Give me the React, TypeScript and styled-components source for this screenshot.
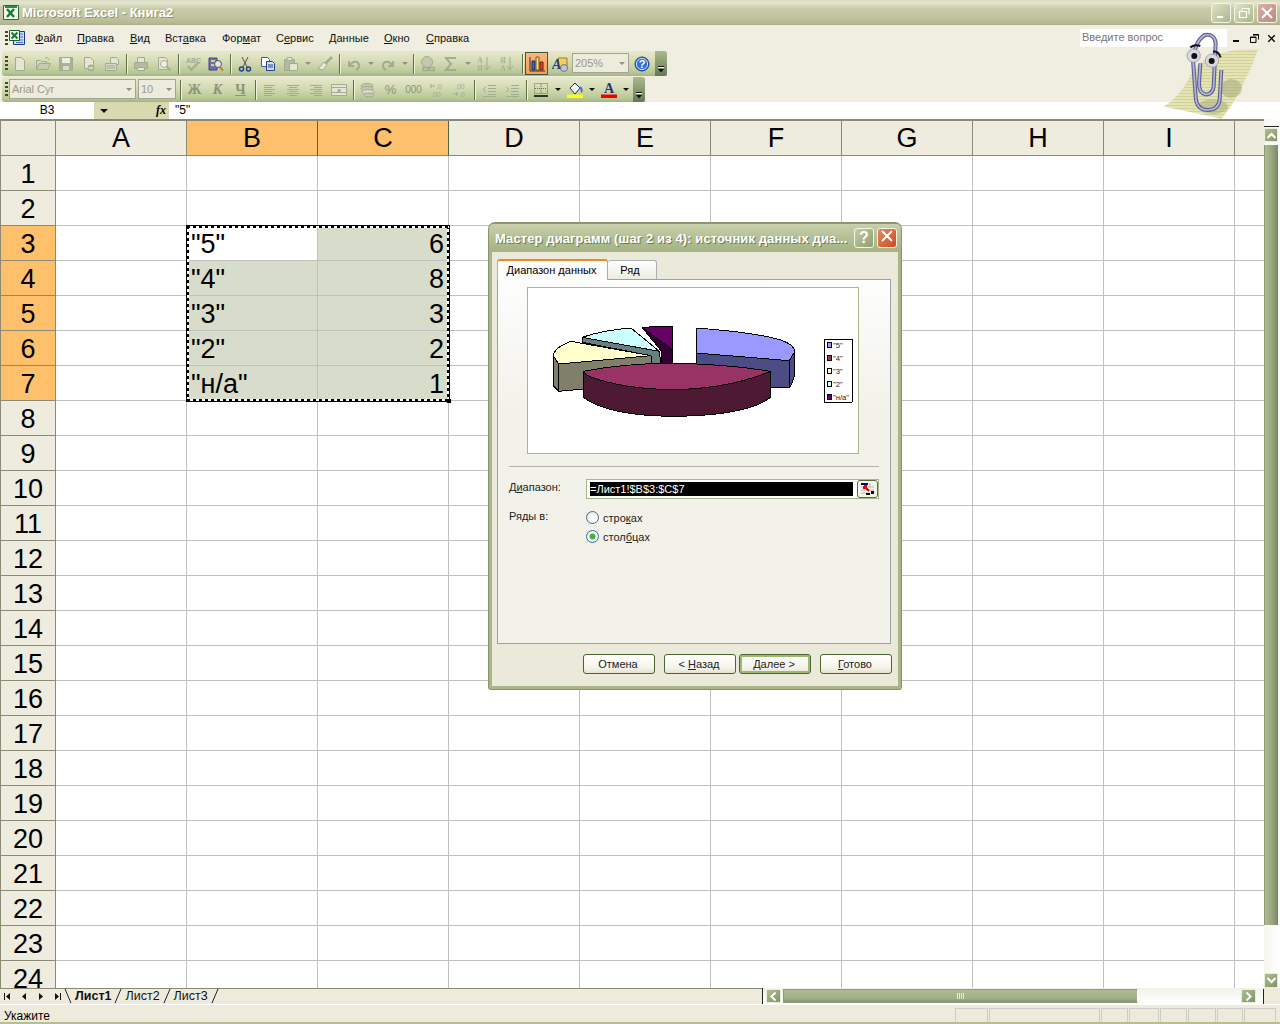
import React from 'react'
import styled, { createGlobalStyle } from 'styled-components'

const GlobalStyle = createGlobalStyle`
  html, body {
    margin: 0;
    padding: 0;
    overflow: hidden;
    background: #fff;
  }
  * {
    box-sizing: border-box;
  }
`

const UI_FONT = `"Liberation Sans", Arial, sans-serif`

const App_ = styled.div`
  position: relative;
  width: 1280px;
  height: 1024px;
  overflow: hidden;
  display: flex;
  flex-direction: column;
  font-family: ${UI_FONT};
  font-size: 11px;
  color: #000;
  background: #fff;
`

/* ---- title bar ---- */
const TitleBar = styled.div`
  height: 25px;
  flex: none;
  display: flex;
  align-items: center;
  padding: 0 3px 0 3px;
  background: linear-gradient(#d9dcc0 0, #e4e6cf 3px, #c9cca9 8px, #bfc39e 18px, #b6ba94 23px, #a9ad8a 25px);
`

const TitleText = styled.span`
  margin-left: 2px;
  flex: 1;
  color: #fff;
  font-size: 13px;
  font-weight: 700;
  text-shadow: 1px 1px 0 #8f9373;
`

const WinButton = styled.div<{ $close?: boolean }>`
  width: 20px;
  height: 20px;
  margin-left: 3px;
  border: 1px solid #f4f5e8;
  border-radius: 3px;
  background: ${p => (p.$close ? 'linear-gradient(135deg,#d8b0a8,#b98980)' : 'linear-gradient(135deg,#dfe3c8,#a9b58b)')};
  display: flex;
  align-items: center;
  justify-content: center;
`

/* ---- menu ---- */
const MenuBar = styled.div`
  height: 26px;
  flex: none;
  display: flex;
  align-items: center;
  padding-left: 5px;
  background: #efeee0;
`

const Grip = styled.div<{ $h?: number }>`
  width: 3px;
  height: ${p => p.$h ?? 15}px;
  flex: none;
  background: repeating-linear-gradient(#3f4a2a 0 2px, transparent 2px 4px);
`

const MenuLogo = styled.div`
  flex: none;
  width: 27px;
  display: flex;
`

const MenuItem = styled.span<{ $w: number }>`
  width: ${p => p.$w}px;
  flex: none;
  color: #111;
  white-space: nowrap;
  u {
    text-underline-offset: 1px;
  }
`

const HelpBox = styled.div`
  margin-left: auto;
  width: 147px;
  height: 18px;
  display: flex;
  align-items: center;
  padding: 0 0 2px 2px;
  background: #fff;
  color: #777;
  font-size: 11px;
`

const MdiButtons = styled.div`
  width: 53px;
  display: flex;
  justify-content: space-between;
  padding-left: 5px;
  padding-right: 4px;
`

/* ---- toolbars ---- */
const ToolRow = styled.div<{ $h: number }>`
  height: ${p => p.$h}px;
  flex: none;
  padding-left: 2px;
  display: flex;
  align-items: flex-start;
  background: #efeee0;
`

const Toolbar = styled.div<{ $w: number }>`
  width: ${p => p.$w}px;
  height: 25px;
  display: flex;
  align-items: center;
  padding-left: 3px;
  border-radius: 3px 0 0 3px;
  background: linear-gradient(#e6e9cb, #d6dcb6 40%, #b9c896 85%, #a3b57f);
`

const Chevron = styled.div`
  margin-left: auto;
  width: 12px;
  height: 25px;
  flex: none;
  border-radius: 0 3px 3px 0;
  background: linear-gradient(#a9b98c, #84946a 60%, #66755a);
  display: flex;
  flex-direction: column;
  align-items: center;
  justify-content: flex-end;
  padding-bottom: 3px;
`

const Tool = styled.div<{ $active?: boolean; $w?: number }>`
  width: ${p => p.$w ?? 23}px;
  height: 23px;
  flex: none;
  display: flex;
  align-items: center;
  justify-content: center;
  ${p => (p.$active ? 'background: linear-gradient(#fbb97e,#f79a55); border: 1px solid #3e5a3e;' : '')}
`

const Sep = styled.div`
  width: 6px;
  height: 20px;
  flex: none;
  display: flex;
  justify-content: center;
  &::before {
    content: '';
    width: 1px;
    background: #5f6e45;
    box-shadow: 1px 0 0 #f0f3dc;
  }
`

const Drop = styled.div<{ $w?: number; $dark?: boolean }>`
  width: ${p => p.$w ?? 11}px;
  flex: none;
  display: flex;
  justify-content: center;
  &::before {
    content: '';
    border-left: 3px solid transparent;
    border-right: 3px solid transparent;
    border-top: 3px solid ${p => (p.$dark ? '#111' : '#8d957a')};
  }
`

const Combo = styled.div<{ $w: number }>`
  width: ${p => p.$w}px;
  height: 20px;
  flex: none;
  margin: 0 1px 1px;
  border: 1px solid #a3a592;
  background: #ecebdc;
  color: #9a9a8a;
  font-size: 11px;
  line-height: 16px;
  display: flex;
  align-items: center;
  padding-left: 2px;
  justify-content: space-between;
`

const FormatGlyph = styled.span<{ $italic?: boolean; $under?: boolean }>`
  font-family: "Liberation Serif", serif;
  font-size: 14px;
  font-weight: 700;
  color: #8a9377;
  font-style: ${p => (p.$italic ? 'italic' : 'normal')};
  text-decoration: ${p => (p.$under ? 'underline' : 'none')};
`

const PlainGlyph = styled.span<{ $size?: number }>`
  font-size: ${p => p.$size ?? 12}px;
  color: #8a9377;
`

/* ---- formula bar ---- */
const FormulaBar = styled.div`
  height: 17px;
  flex: none;
  display: flex;
  background: #d8d9b1;
  font-size: 12px;
`

const NameBox = styled.div`
  width: 94px;
  text-align: center;
  background: #fff;
  line-height: 17px;
`

const NameDrop = styled.div`
  width: 19px;
  display: flex;
  align-items: center;
  justify-content: center;
  &::before {
    content: '';
    border-left: 4px solid transparent;
    border-right: 4px solid transparent;
    border-top: 4px solid #111;
  }
`

const FxLabel = styled.div`
  width: 56px;
  padding-right: 3px;
  text-align: right;
  font-family: "Liberation Serif", serif;
  font-style: italic;
  font-weight: 700;
  line-height: 17px;
`

const FormulaInput = styled.div`
  flex: 1;
  background: #fff;
  padding-left: 6px;
  line-height: 17px;
`

/* ---- sheet ---- */
const Workspace = styled.div`
  flex: none;
  height: 869px;
  display: flex;
`

const Sheet = styled.div`
  position: relative;
  width: 1264px;
  overflow: hidden;
  padding-left: 1px;
  border-top: 2px solid #8a8a75;
  box-shadow: inset 1px 0 0 #8a8a75;
`

const Grid = styled.div`
  display: grid;
  grid-template-columns: 55px repeat(10, 131px);
  grid-auto-rows: 35px;
  font-size: 27px;
  line-height: 36px;
`

const ColHead = styled.div<{ $on?: boolean }>`
  text-align: center;
  background: ${p => (p.$on ? '#ffc06c' : '#eeebdf')};
  border-right: 1px solid ${p => (p.$on ? '#4e6a3c' : '#8a8a75')};
  border-bottom: 1px solid #8a8a75;
  line-height: 34px;
`

const RowHead = styled.div<{ $on?: boolean }>`
  text-align: center;
  background: ${p => (p.$on ? '#ffc06c' : '#eeebdf')};
  border-right: 1px solid #8a8a75;
  border-bottom: 1px solid #8a8a75;
`

const Cell = styled.div<{ $sel?: boolean; $right?: boolean }>`
  background: ${p => (p.$sel ? '#d8dccb' : '#fff')};
  border-right: 1px solid #c0c0c0;
  border-bottom: 1px solid #c0c0c0;
  padding: 0 4px 0 4px;
  text-align: ${p => (p.$right ? 'right' : 'left')};
  white-space: nowrap;
`

const Selection = styled.div`
  position: absolute;
  left: 186px;
  top: 104px;
  width: 264px;
  height: 177px;
  border: 1px solid #000;
  pointer-events: none;
  background:
    repeating-linear-gradient(90deg, #000 0 3px, #fff 3px 6px) top / 100% 2px no-repeat,
    repeating-linear-gradient(90deg, #000 0 3px, #fff 3px 6px) bottom / 100% 2px no-repeat,
    repeating-linear-gradient(#000 0 3px, #fff 3px 6px) left / 2px 100% no-repeat,
    repeating-linear-gradient(#000 0 3px, #fff 3px 6px) right / 2px 100% no-repeat;
  &::after {
    content: '';
    position: absolute;
    right: -2px;
    bottom: -2px;
    width: 4px;
    height: 4px;
    background: #000;
  }
`

/* ---- scrollbars ---- */
const VScroll = styled.div`
  width: 16px;
  display: flex;
  flex-direction: column;
  align-items: flex-start;
  background: linear-gradient(90deg, #f6f5ee, #fff);
`

const ScrollEnd = styled.div`
  width: 15px;
  height: 8px;
  margin-bottom: 1px;
  border-bottom: 1px solid #222;
  flex: none;
`

const ScrollButton = styled.div<{ $w?: number; $h?: number }>`
  width: ${p => p.$w ?? 14}px;
  height: ${p => p.$h ?? 14}px;
  flex: none;
  border: 1px solid #e9eddc;
  background: linear-gradient(135deg, #aebf90, #7f9566);
  display: flex;
  align-items: center;
  justify-content: center;
`

const VThumb = styled.div`
  width: 14px;
  height: 780px;
  margin-top: 3px;
  flex: none;
  background: linear-gradient(90deg, #aebb93, #95a67b 60%, #7f9068);
  border-left: 1px solid #8c9c72;
  border-right: 1px solid #7a8a62;
`

const BottomBar = styled.div`
  height: 17px;
  flex: none;
  display: flex;
  background: #eeebdc;
  border-bottom: 1px solid #fff;
`

const SheetTabs = styled.div`
  width: 762px;
  display: flex;
  align-items: center;
  padding-left: 4px;
  font-size: 12.5px;
  box-shadow: inset 0 1px 0 #8a8a75;
`

const NavArrows = styled.div`
  width: 60px;
  flex: none;
  display: flex;
  justify-content: space-between;
  padding-right: 3px;
`

const TabName = styled.span<{ $on?: boolean }>`
  padding: 0 2px;
  margin: 0 1px;
  font-weight: ${p => (p.$on ? 700 : 400)};
  color: #111;
`

const HScroll = styled.div`
  width: 502px;
  display: flex;
  align-items: center;
  padding-left: 3px;
  border-left: 1px solid #222;
  background: linear-gradient(#f3f2ea, #fff);
`

const HThumb = styled.div`
  width: 355px;
  height: 14px;
  margin-left: 2px;
  background: linear-gradient(#afbb95, #9eae85 70%, #879871);
  border: 1px solid #8c9c72;
  border-right: 1px solid #fff;
  display: flex;
  align-items: center;
  justify-content: center;
`

const Ticks = styled.div`
  width: 8px;
  height: 6px;
  background: repeating-linear-gradient(90deg, #e6ecd2 0 1px, transparent 1px 2px);
`

const HGap = styled.div`
  flex: 1;
`

const HEnd = styled.div`
  width: 8px;
  height: 15px;
  border-right: 1px solid #222;
`

const StatusBar = styled.div`
  height: 19px;
  flex: none;
  display: flex;
  align-items: flex-start;
  padding: 5px 0 0 4px;
  background: #eeebdc;
  border-bottom: 2px solid #b6bf92;
  font-size: 12px;
  line-height: 12px;
`

const StatusCells = styled.div`
  margin-left: auto;
  margin-right: 4px;
  margin-top: -2px;
  display: flex;
  align-items: stretch;
  height: 14px;
`

const StatusCell = styled.div<{ $w: number }>`
  width: ${p => p.$w}px;
  margin-left: 1px;
  border: 1px solid #cfcdc1;
  border-bottom: none;
`

/* ---- dialog ---- */
const Dialog = styled.div`
  position: absolute;
  left: 489px;
  top: 223px;
  width: 412px;
  height: 466px;
  display: flex;
  flex-direction: column;
  background: #ebe9d9;
  border: 3px solid #a8b587;
  border-top: 1px solid #8b9870;
  border-radius: 6px 6px 2px 2px;
  box-shadow: 0 0 0 1px #87936e;
`

const DialogTitle = styled.div`
  height: 28px;
  margin: 0 -3px;
  flex: none;
  display: flex;
  align-items: center;
  padding: 0 4px 0 6px;
  background: linear-gradient(#c9d0ac, #b4bf93 50%, #a5b284);
  border-radius: 5px 5px 0 0;
`

const DialogCaption = styled.span`
  flex: 1;
  color: #fff;
  font-size: 13px;
  font-weight: 700;
  letter-spacing: 0.1px;
  white-space: nowrap;
  text-shadow: 1px 1px 0 #6e7a55;
`

const DialogBtn = styled.div<{ $close?: boolean }>`
  width: 20px;
  height: 20px;
  margin-left: 3px;
  border: 1px solid #f4f5e8;
  border-radius: 3px;
  color: #fff;
  font-size: 16px;
  font-weight: 700;
  line-height: 18px;
  text-align: center;
  background: ${p => (p.$close ? 'linear-gradient(135deg,#e88a62,#c94a22)' : 'linear-gradient(135deg,#c4cea4,#8f9e70)')};
`

const TabStrip = styled.div`
  display: flex;
  align-items: flex-end;
  height: 27px;
  flex: none;
  padding-left: 5px;
`

const DlgTab = styled.div<{ $on?: boolean }>`
  height: ${p => (p.$on ? 21 : 19)}px;
  width: ${p => (p.$on ? 111 : 49)}px;
  padding-right: ${p => (p.$on ? 2 : 4)}px;
  text-align: center;
  line-height: 18px;
  font-size: 11px;
  background: ${p => (p.$on ? '#fdfdfb' : 'linear-gradient(#fff,#ecebe0)')};
  border: 1px solid #a8b0b4;
  border-bottom: none;
  border-left-width: ${p => (p.$on ? 1 : 0)}px;
  border-top: ${p => (p.$on ? '2px solid #e68b2c' : '1px solid #a8b0b4')};
  border-radius: 3px 3px 0 0;
  margin-bottom: ${p => (p.$on ? -1 : 0)}px;
  position: relative;
`

const TabPanel = styled.div`
  width: 394px;
  height: 365px;
  margin-left: 5px;
  flex: none;
  padding: 7px 0 0 29px;
  border: 1px solid #96a3a8;
  background: linear-gradient(#fdfdfd, #f3f2ea 35%);
`

const ChartBox = styled.div`
  width: 332px;
  height: 167px;
  border: 1px solid #a9b88c;
  background: #fff;
`

const Divider = styled.div`
  width: 370px;
  height: 1px;
  margin: 12px 0 12px -18px;
  background: #b4b4a6;
`

const FormRow = styled.div`
  margin-left: -18px;
  display: flex;
  font-size: 11px;
  color: #222;
`

const FormLabel = styled.div<{ $top?: number }>`
  width: 77px;
  padding-top: ${p => p.$top ?? 0}px;
`

const RangeInput = styled.div`
  width: 293px;
  height: 20px;
  display: flex;
  align-items: center;
  justify-content: space-between;
  padding: 0 0 0 3px;
  border: 1px solid #a5b98a;
  background: #fff;
`

const RangeValue = styled.div`
  width: 263px;
  height: 14px;
  background: #000;
  color: #fff;
  line-height: 14px;
  font-size: 11px;
`

const RangeButton = styled.div`
  width: 21px;
  height: 18px;
  border: 1px solid #55703a;
  border-radius: 3px;
  background: #f6f5ea;
  display: flex;
  align-items: center;
  justify-content: center;
`

const RadioGroup = styled.div`
  display: flex;
  flex-direction: column;
  gap: 6px;
  margin-top: 12px;
`

const RadioRow = styled.div`
  display: flex;
  align-items: center;
  gap: 4px;
  height: 13px;
`

const Radio = styled.span<{ $on?: boolean }>`
  width: 13px;
  height: 13px;
  border-radius: 50%;
  border: 1px solid #3f6a96;
  background: ${p =>
    p.$on
      ? 'radial-gradient(circle, #3cb43c 0 2.5px, #fff 3.5px, #dcdcd0)'
      : 'radial-gradient(circle at 65% 65%, #fff 30%, #dcdcd0)'};
`

const ButtonRow = styled.div`
  display: flex;
  padding: 10px 0 0 91px;
`

const DlgButton = styled.div<{ $default?: boolean; $gap?: number }>`
  width: 72px;
  height: 20px;
  margin-left: ${p => p.$gap ?? 0}px;
  padding-right: 2px;
  border: 1px solid #4a6630;
  border-radius: 3px;
  background: linear-gradient(#fff, #f5f4ea 70%, #e4e2d0);
  box-shadow: ${p => (p.$default ? 'inset 0 0 0 2px #9dbb70' : 'none')};
  text-align: center;
  font-size: 11px;
  line-height: 19px;
  color: #222;
`

const Assistant = styled.div`
  position: absolute;
  left: 1163px;
  top: 30px;
  width: 97px;
  height: 90px;
  pointer-events: none;
`

/* ---- drawings ---- */
const DIM = '#a3ab91'
const DIM_FILL = '#e4e6d2'

const Ico: React.FC<{ children: React.ReactNode; w?: number }> = ({ children, w = 16 }) => (
  <svg width={w} height={16} viewBox={`0 0 ${w} 16`}>
    {children}
  </svg>
)

const icons: Record<string, React.ReactNode> = {
  new: <path d="M3.5 1.5h6l3 3v10h-9z" fill={DIM_FILL} stroke={DIM} />,
  open: (
    <>
      <path d="M1.5 13.5v-9h4l1 1h5v2" fill="none" stroke={DIM} />
      <path d="M1.5 13.5l3-6h11l-3 6z" fill="#c7ccae" stroke={DIM} />
      <path d="M10 2c2-1 3 0 4 2" fill="none" stroke={DIM} />
    </>
  ),
  save: (
    <>
      <path d="M1.5 1.5h13v13h-13z" fill="#aab295" stroke={DIM} />
      <path d="M4 2h8v5H4z" fill="#eceee0" />
      <path d="M5 10h6v4H5z" fill="#d8dbc8" />
    </>
  ),
  perm: (
    <>
      <path d="M3.5 1.5h6l3 3v8h-9z" fill={DIM_FILL} stroke={DIM} />
      <circle cx="10" cy="12" r="3.5" fill="#aab295" />
      <path d="M8 12h4" stroke="#fff" />
    </>
  ),
  mail: (
    <>
      <path d="M6.5 1.5h6l2 2v5h-8z" fill={DIM_FILL} stroke={DIM} />
      <path d="M1.5 7.5h11v7h-11z" fill="#d4d7c2" stroke={DIM} />
      <path d="M3 10h8M3 12h8" stroke={DIM} />
    </>
  ),
  print: (
    <>
      <path d="M4.5 1.5h7v5h-7z" fill={DIM_FILL} stroke={DIM} />
      <path d="M1.5 6.5h13v6h-13z" fill="#b4ba9f" stroke={DIM} />
      <path d="M4.5 11.5h7v3h-7z" fill={DIM_FILL} stroke={DIM} />
    </>
  ),
  preview: (
    <>
      <path d="M2.5 1.5h7l2 2v10h-9z" fill={DIM_FILL} stroke={DIM} />
      <circle cx="8" cy="8" r="3.5" fill="#eef0e0" stroke={DIM} />
      <path d="M10.5 10.5l4 4" stroke={DIM} strokeWidth="2" />
    </>
  ),
  spell: (
    <>
      <text x="1" y="7" fontSize="7" fontFamily="Liberation Sans" fontWeight="700" fill={DIM}>ABC</text>
      <path d="M3 10l3 4 8-8" fill="none" stroke={DIM} strokeWidth="2" />
    </>
  ),
  research: (
    <>
      <path d="M1 2h8v12H1z" fill="#6f6fb8" stroke="#44447a" />
      <path d="M3 4h4v2H3zM3 8h4v2H3z" fill="#f0c860" />
      <circle cx="10" cy="8" r="3.5" fill="#dde8f4" stroke="#555" />
      <path d="M12 11l3 3.5" stroke="#b8862a" strokeWidth="2" />
    </>
  ),
  cut: (
    <>
      <path d="M5 1l5 10M11 1L6 11" stroke="#555" fill="none" />
      <circle cx="4.5" cy="13" r="2" fill="none" stroke="#24408e" strokeWidth="1.5" />
      <circle cx="11.5" cy="13" r="2" fill="none" stroke="#24408e" strokeWidth="1.5" />
    </>
  ),
  copy: (
    <>
      <path d="M1.5 1.5h6l2 2v7h-8z" fill="#fff" stroke="#3a5a9a" />
      <path d="M6.5 5.5h6l2 2v7h-8z" fill="#cfe0f4" stroke="#24408e" />
      <path d="M8 9h5M8 11h5" stroke="#24408e" />
    </>
  ),
  paste: (
    <>
      <path d="M1.5 3.5h10v11h-10z" fill="#b4ba9f" stroke={DIM} />
      <path d="M4 1.5h5v3H4z" fill={DIM_FILL} stroke={DIM} />
      <path d="M6.5 7.5h8v7h-8z" fill={DIM_FILL} stroke={DIM} />
    </>
  ),
  painter: (
    <>
      <path d="M15 1L8 8" stroke={DIM} strokeWidth="2.5" />
      <path d="M7 6l3 3-4 5-5-1z" fill={DIM_FILL} stroke={DIM} />
    </>
  ),
  undo: <path d="M3 5v5h5M4 9c3-5 9-4 9 1 0 2-1 3-3 4" fill="none" stroke={DIM} strokeWidth="2" />,
  redo: <path d="M13 5v5H8M12 9C9 4 3 5 3 10c0 2 1 3 3 4" fill="none" stroke={DIM} strokeWidth="2" />,
  link: (
    <>
      <circle cx="7" cy="6" r="5.5" fill="#c4c9ae" stroke={DIM} />
      <path d="M3 11.5h5v3H3zM9 11.5h5v3H9z" fill="none" stroke={DIM} strokeWidth="1.5" />
    </>
  ),
  sum: <path d="M12 3V2H3l5 6-5 6h9v-1" fill="none" stroke={DIM} strokeWidth="2" />,
  sortAz: (
    <>
      <text x="0" y="7" fontSize="8" fontFamily="Liberation Serif" fontWeight="700" fill="#aab295">А</text>
      <text x="0" y="15" fontSize="8" fontFamily="Liberation Serif" fontWeight="700" fill="#aab295">Я</text>
      <path d="M10 1v12M7 10l3 4 3-4" fill="none" stroke={DIM} />
    </>
  ),
  sortZa: (
    <>
      <text x="0" y="7" fontSize="8" fontFamily="Liberation Serif" fontWeight="700" fill="#aab295">Я</text>
      <text x="0" y="15" fontSize="8" fontFamily="Liberation Serif" fontWeight="700" fill="#aab295">А</text>
      <path d="M10 1v12M7 10l3 4 3-4" fill="none" stroke={DIM} />
    </>
  ),
  chart: (
    <>
      <path d="M3 5h3v9H3z" fill="#3a62c4" stroke="#1a2a6e" />
      <path d="M7 1h3v13H7z" fill="#f4e070" stroke="#7a5a10" />
      <path d="M11 6h3v8h-3z" fill="#d8462a" stroke="#6e1a10" />
      <path d="M1 1v14h15" fill="none" stroke="#333" />
    </>
  ),
  drawing: (
    <>
      <path d="M6 2h9v9H6z" fill="#f4d060" stroke="#a07a20" />
      <circle cx="12" cy="12" r="3.5" fill="#c0c4d8" stroke="#777" />
      <text x="0" y="13" fontSize="14" fontFamily="Liberation Serif" fontWeight="700" fontStyle="italic" fill="#2a3c8e">A</text>
    </>
  ),
  help: (
    <>
      <circle cx="8" cy="8" r="7" fill="#2f6fd8" stroke="#1c3f90" />
      <circle cx="8" cy="8" r="5.6" fill="none" stroke="#cfe0fa" />
      <text x="8" y="12" textAnchor="middle" fontSize="11" fontWeight="700" fontFamily="Liberation Sans" fill="#fff">?</text>
    </>
  ),
  left: <path d="M2 3.500h11M2 5.500h8M2 7.500h11M2 9.500h8M2 11.500h11M2 13.500h8" stroke={DIM} />,
  center: <path d="M2 3.500h12M4 5.500h8M2 7.500h12M4 9.500h8M2 11.500h12M4 13.500h8" stroke={DIM} />,
  right: <path d="M2 3.500h12M6 5.500h8M2 7.500h12M6 9.500h8M2 11.500h12M6 13.500h8" stroke={DIM} />,
  merge: (
    <>
      <path d="M0.5 2.5h15v11H.5z" fill={DIM_FILL} stroke={DIM} />
      <path d="M1 5.5h14M1 10.5h14" stroke={DIM} />
      <text x="8" y="10" textAnchor="middle" fontSize="6" fontFamily="Liberation Sans" fill="#777f68">a</text>
    </>
  ),
  money: (
    <>
      <ellipse cx="7" cy="4" rx="6" ry="2.5" fill="#c4c9ae" stroke={DIM} />
      <ellipse cx="7" cy="7" rx="6" ry="2.5" fill="#c4c9ae" stroke={DIM} />
      <ellipse cx="8" cy="10" rx="6" ry="2.5" fill="#dadcc8" stroke={DIM} />
      <ellipse cx="9" cy="13" rx="5" ry="2" fill="#c4c9ae" stroke={DIM} />
    </>
  ),
  incDec: (
    <>
      <path d="M6 4H1M3 2L1 4l2 2" fill="none" stroke={DIM} />
      <text x="7" y="7" fontSize="7" fontFamily="Liberation Sans" fill={DIM}>,0</text>
      <text x="2" y="15" fontSize="7" fontFamily="Liberation Sans" fill={DIM}>,00</text>
    </>
  ),
  decDec: (
    <>
      <text x="3" y="7" fontSize="7" fontFamily="Liberation Sans" fill={DIM}>,00</text>
      <path d="M1 12h5M4 10l2 2-2 2" fill="none" stroke={DIM} />
      <text x="7" y="15" fontSize="7" fontFamily="Liberation Sans" fill={DIM}>,0</text>
    </>
  ),
  outdent: (
    <>
      <path d="M7 3.500h8M7 6.500h8M7 9.500h8M7 12.500h8M2 14.500h13" stroke={DIM} />
      <path d="M5 5L2 7.500 5 10" fill="none" stroke={DIM} />
    </>
  ),
  indent: (
    <>
      <path d="M7 3.500h8M7 6.500h8M7 9.500h8M7 12.500h8M2 14.500h13" stroke={DIM} />
      <path d="M2 5l3 2.500L2 10" fill="none" stroke={DIM} />
    </>
  ),
  borders: (
    <>
      <path d="M1.500 1.500h13v10h-13zM8 2v10M2 6.500h12" fill="none" stroke="#66705a" strokeDasharray="1 1" />
      <path d="M1 14h14" stroke="#000" strokeWidth="1.500" />
    </>
  ),
  fill: (
    <>
      <path d="M3 6l5-5 5 5-5 6z" fill="#f2f3ea" stroke="#24306e" />
      <path d="M13 5c2 2 2 4 1 5" fill="none" stroke="#4a70c4" strokeWidth="2" />
      <path d="M0 12.500h16V16H0z" fill="#ffff00" />
    </>
  ),
  fontColor: (
    <>
      <text x="8" y="11" textAnchor="middle" fontSize="14" fontWeight="700" fontFamily="Liberation Serif" fill="#24367e">A</text>
      <path d="M0 12.500h16V16H0z" fill="#f00000" />
    </>
  ),
}

const Icon: React.FC<{ name: string }> = ({ name }) => <Ico>{icons[name]}</Ico>

const ExcelIcon: React.FC = () => (
  <svg width="17" height="17" viewBox="0 0 17 17">
    <path d="M.5 1.500h15v14H.5z" fill="#f2f7ee" stroke="#2c6a3a" />
    <path d="M2 2h12v2H2z" fill="#2f8a46" />
    <path d="M4 5l7 8M11 5l-7 8" stroke="#1c7a38" strokeWidth="2.500" />
  </svg>
)

const MenuExcelIcon: React.FC = () => (
  <svg width="18" height="18" viewBox="0 0 18 18">
    <path d="M5.500 2.500h11v13h-11z" fill="#c8dcf4" stroke="#1c3a80" />
    <path d="M8 5h7M8 8h7M8 11h7M8 13.500h7" stroke="#4a70c4" />
    <path d="M1.500 1.500h10v10h-10z" fill="#f0f6ea" stroke="#1e5a2e" />
    <path d="M3.500 3.500l6 6M9.500 3.500l-6 6" stroke="#1c7a38" strokeWidth="2" />
  </svg>
)

const ChevronMark: React.FC = () => (
  <svg width="8" height="7" viewBox="0 0 8 7">
    <path d="M1 .5h6" stroke="#111" />
    <path d="M1 1.500h6" stroke="#fff" />
    <path d="M1 3h6L4 6.500z" fill="#111" />
  </svg>
)

const PieChart: React.FC = () => (
  <svg width="330" height="165" viewBox="121 202 990 495" shapeRendering="crispEdges">
    <g stroke="#000" strokeWidth="3" strokeLinejoin="round">
      <path d="M625 397L905 420L905 502L625 500Z" fill="#4d4d85" />
      <path d="M905 420L920 395L922 450Q918 485 905 502Z" fill="#4d4d85" />
      <path d="M625 322Q800 335 880 358Q925 375 920 395L905 420L625 397Z" fill="#9999ff" />
      <path d="M213 430L490 405L490 440L290 505L213 512Z" fill="#80806a" />
      <path d="M197 405L213 430L213 512L197 495Z" fill="#80806a" />
      <path d="M250 362Q200 380 197 405L213 430L490 405Z" fill="#ffffcc" />
      <path d="M283 350L515 392L520 432L490 432L490 405L283 365Z" fill="#668080" />
      <path d="M283 350Q350 328 430 322L515 392Z" fill="#ccffff" />
      <path d="M463 320L553 387L553 430L520 430L520 390Z" fill="#330033" />
      <path d="M463 320L553 316L553 387Z" fill="#660066" />
      <path d="M287 452L300 465Q400 505 555 507Q720 505 848 452L848 530Q780 585 555 587Q360 585 287 530Z" fill="#4d1933" />
      <path d="M287 452Q410 428 550 428Q720 430 848 452Q720 505 555 507Q400 505 300 465Z" fill="#993366" />
      <path d="M1010 355h83v190h-83z" fill="#fff" />
    </g>
    {[
      ['"5"', '#9999ff', 372],
      ['"4"', '#993366', 411],
      ['"3"', '#ffffcc', 450],
      ['"2"', '#ccffff', 489],
      ['"н/а"', '#660066', 528],
    ].map(([label, color, y]) => (
      <g key={label as string}>
        <rect x="1018" y={(y as number) - 6} width="13" height="13" fill={color as string} stroke="#000" strokeWidth="3" />
        <text x="1036" y={(y as number) + 9} fontSize="23" fontFamily="Liberation Sans" fill="#222">
          {label as string}
        </text>
      </g>
    ))}
  </svg>
)

const CLIP_PATH =
  'M545 210L540 300Q535 330 505 330Q470 330 468 290L460 180Q465 125 495 105Q525 100 528 130L522 260Q518 285 497 283Q478 280 478 250L482 190'

const Clippy: React.FC = () => (
  <svg width="97" height="90" viewBox="370 90 291 270">
    <defs>
      <pattern id="paperLines" width="6" height="9" patternUnits="userSpaceOnUse">
        <rect width="6" height="9" fill="#e6e4b2" />
        <rect width="6" height="3" fill="#cfd29a" />
      </pattern>
    </defs>
    <path
      d="M372 320Q420 290 445 240Q465 190 520 165Q590 145 655 148Q635 210 600 270Q575 325 545 356Q450 335 372 320Z"
      fill="url(#paperLines)"
    />
    <ellipse cx="575" cy="265" rx="32" ry="28" fill="#a7a77e" opacity="0.55" />
    <ellipse cx="520" cy="320" rx="45" ry="22" fill="#a7a77e" opacity="0.5" />
    <path d={CLIP_PATH} fill="none" stroke="#5f6196" strokeWidth="12" />
    <path d={CLIP_PATH} fill="none" stroke="#b4b7d8" strokeWidth="5" />
    <circle cx="462" cy="167" r="20" fill="#d8d8de" stroke="#8a8a98" strokeWidth="2" />
    <circle cx="517" cy="182" r="20" fill="#d8d8de" stroke="#8a8a98" strokeWidth="2" />
    <circle cx="464" cy="168" r="9" fill="#111" />
    <circle cx="516" cy="183" r="9" fill="#111" />
    <path d="M452 142Q465 132 482 138M520 155Q535 152 543 172" fill="none" stroke="#111" strokeWidth="6" />
  </svg>
)

const Minus: React.FC = () => (
  <svg width="14" height="14" viewBox="0 0 14 14">
    <path d="M3 10h6v2H3z" fill="#fff" />
  </svg>
)

const Restore: React.FC = () => (
  <svg width="14" height="14" viewBox="0 0 14 14">
    <path d="M5 2.500h7v6M5 2.500v2M2.500 5.500h7v6h-7z" fill="none" stroke="#fff" strokeWidth="1.200" />
  </svg>
)

const CloseX: React.FC<{ color?: string; size?: number }> = ({ color = '#fff', size = 14 }) => (
  <svg width={size} height={size} viewBox="0 0 14 14">
    <path d="M2 2l10 10M12 2L2 12" stroke={color} strokeWidth="2" />
  </svg>
)

const MdiMin: React.FC = () => (
  <svg width="9" height="9" viewBox="0 0 9 9">
    <path d="M1 6h6v2H1z" fill="#000" />
  </svg>
)

const MdiRestore: React.FC = () => (
  <svg width="9" height="9" viewBox="0 0 9 9">
    <path d="M3 .5h5.500v5M.5 3h5.500v5.500H.5z" fill="none" stroke="#000" />
    <path d="M3 1h5.500M.5 3.500h5.500" stroke="#000" />
  </svg>
)

const ArrowChevron: React.FC<{ d: 'up' | 'down' | 'left' | 'right' }> = ({ d }) => {
  const path = {
    up: 'M1.500 8l4-4 4 4',
    down: 'M1.500 3l4 4 4-4',
    left: 'M7.500 1.500l-4 4 4 4',
    right: 'M3.500 1.500l4 4-4 4',
  }[d]
  return (
    <svg width="11" height="11" viewBox="0 0 11 11">
      <path d={path} fill="none" stroke="#fff" strokeWidth="2" />
    </svg>
  )
}

const Nav: React.FC<{ kind: 'first' | 'prev' | 'next' | 'last' }> = ({ kind }) => (
  <svg width="7" height="9" viewBox="0 0 7 9">
    {kind === 'first' && <path d="M0 1h1v7H0zM6 1v7L2 4.500z" fill="#111" />}
    {kind === 'prev' && <path d="M5 1v7L1 4.500z" fill="#111" />}
    {kind === 'next' && <path d="M2 1v7l4-3.500z" fill="#111" />}
    {kind === 'last' && <path d="M6 1h1v7H6zM1 1v7l4-3.500z" fill="#111" />}
  </svg>
)

const Slash: React.FC<{ back?: boolean }> = ({ back }) => (
  <svg width="8" height="16" viewBox="0 0 8 16">
    <path d={back ? 'M1 1l6 14' : 'M7 1L1 15'} stroke="#222" fill="none" />
  </svg>
)

const RangeIcon: React.FC = () => (
  <svg width="15" height="14" viewBox="0 0 15 14">
    <path d="M1 1h7v2H1z" fill="#000080" />
    <path d="M1 5h13M1 8h13M1 11h8M10 1v4" stroke="#b8b8b8" />
    <path d="M4 4l5 5M4 4h3M4 4v3" stroke="#f00000" strokeWidth="2" fill="none" />
    <path d="M6 11h4v2H6zM11 9h3v3h-3z" fill="#000" />
  </svg>
)

/* ---- data ---- */
const COLUMNS = ['A', 'B', 'C', 'D', 'E', 'F', 'G', 'H', 'I', '']
const ROWS = Array.from({ length: 24 }, (_, i) => i + 1)
const DATA: Record<number, [string, string]> = {
  3: ['"5"', '6'],
  4: ['"4"', '8'],
  5: ['"3"', '3'],
  6: ['"2"', '2'],
  7: ['"н/а"', '1'],
}

const MENU: [React.ReactNode, number][] = [
  [<><u>Ф</u>айл</>, 42],
  [<><u>П</u>равка</>, 53],
  [<><u>В</u>ид</>, 35],
  [<>Вст<u>а</u>вка</>, 57],
  [<>Фор<u>м</u>ат</>, 54],
  [<>С<u>е</u>рвис</>, 53],
  [<><u>Д</u>анные</>, 55],
  [<><u>О</u>кно</>, 42],
  [<><u>С</u>правка</>, 60],
]

const STATUS_CELLS = [33, 111, 27, 30, 27, 28, 26, 32]

const App: React.FC = () => (
  <App_>
    <GlobalStyle />
    <TitleBar>
      <ExcelIcon />
      <TitleText>Microsoft Excel - Книга2</TitleText>
      <WinButton><Minus /></WinButton>
      <WinButton><Restore /></WinButton>
      <WinButton $close><CloseX /></WinButton>
    </TitleBar>

    <MenuBar>
      <Grip />
      <MenuLogo><MenuExcelIcon /></MenuLogo>
      {MENU.map(([label, w], i) => (
        <MenuItem key={i} $w={w}>{label}</MenuItem>
      ))}
      <HelpBox>Введите вопрос</HelpBox>
      <MdiButtons>
        <MdiMin />
        <MdiRestore />
        <CloseX color="#000" size={9} />
      </MdiButtons>
    </MenuBar>

    <ToolRow $h={26}>
      <Toolbar $w={665}>
        <Grip />
        {['new', 'open', 'save', 'perm', 'mail'].map(n => <Tool key={n}><Icon name={n} /></Tool>)}
        <Sep />
        <Tool><Icon name="print" /></Tool>
        <Tool><Icon name="preview" /></Tool>
        <Sep />
        <Tool><Icon name="spell" /></Tool>
        <Tool><Icon name="research" /></Tool>
        <Sep />
        <Tool><Icon name="cut" /></Tool>
        <Tool><Icon name="copy" /></Tool>
        <Tool><Icon name="paste" /></Tool>
        <Drop />
        <Tool><Icon name="painter" /></Tool>
        <Sep />
        <Tool><Icon name="undo" /></Tool>
        <Drop />
        <Tool><Icon name="redo" /></Tool>
        <Drop />
        <Sep />
        <Tool><Icon name="link" /></Tool>
        <Tool><Icon name="sum" /></Tool>
        <Drop />
        <Tool><Icon name="sortAz" /></Tool>
        <Tool><Icon name="sortZa" /></Tool>
        <Sep />
        <Tool $active><Icon name="chart" /></Tool>
        <Tool><Icon name="drawing" /></Tool>
        <Combo $w={57}>205%<Drop $w={12} /></Combo>
        <Tool><Icon name="help" /></Tool>
        <Chevron><ChevronMark /></Chevron>
      </Toolbar>
    </ToolRow>

    <ToolRow $h={25}>
      <Toolbar $w={643}>
        <Grip />
        <Combo $w={127}>Arial Cyr<Drop $w={12} /></Combo>
        <Combo $w={38}>10<Drop $w={12} /></Combo>
        <Sep />
        <Tool><FormatGlyph>Ж</FormatGlyph></Tool>
        <Tool><FormatGlyph $italic>К</FormatGlyph></Tool>
        <Tool><FormatGlyph $under>Ч</FormatGlyph></Tool>
        <Sep />
        {['left', 'center', 'right', 'merge'].map(n => <Tool key={n}><Icon name={n} /></Tool>)}
        <Sep />
        <Tool><Icon name="money" /></Tool>
        <Tool><PlainGlyph $size={13}>%</PlainGlyph></Tool>
        <Tool><PlainGlyph $size={10}>000</PlainGlyph></Tool>
        <Tool><Icon name="incDec" /></Tool>
        <Tool><Icon name="decDec" /></Tool>
        <Sep />
        <Tool><Icon name="outdent" /></Tool>
        <Tool><Icon name="indent" /></Tool>
        <Sep />
        <Tool><Icon name="borders" /></Tool>
        <Drop $dark />
        <Tool><Icon name="fill" /></Tool>
        <Drop $dark />
        <Tool><Icon name="fontColor" /></Tool>
        <Drop $dark />
        <Chevron><ChevronMark /></Chevron>
      </Toolbar>
    </ToolRow>

    <FormulaBar>
      <NameBox>B3</NameBox>
      <NameDrop />
      <FxLabel>fx</FxLabel>
      <FormulaInput>"5"</FormulaInput>
    </FormulaBar>

    <Workspace>
      <Sheet>
        <Grid>
          <ColHead />
          {COLUMNS.map((c, i) => (
            <ColHead key={i} $on={c === 'B' || c === 'C'}>{c}</ColHead>
          ))}
          {ROWS.map(r => (
            <React.Fragment key={r}>
              <RowHead $on={r >= 3 && r <= 7}>{r}</RowHead>
              {COLUMNS.map((c, i) => {
                const inRange = r in DATA && (c === 'B' || c === 'C')
                return (
                  <Cell key={i} $sel={inRange && !(r === 3 && c === 'B')} $right={c === 'C'}>
                    {inRange ? DATA[r][c === 'B' ? 0 : 1] : ''}
                  </Cell>
                )
              })}
            </React.Fragment>
          ))}
        </Grid>
        <Selection />
      </Sheet>
      <VScroll>
        <ScrollEnd />
        <ScrollButton><ArrowChevron d="up" /></ScrollButton>
        <VThumb />
        <HGap />
        <ScrollButton $h={15}><ArrowChevron d="down" /></ScrollButton>
      </VScroll>
    </Workspace>

    <BottomBar>
      <SheetTabs>
        <NavArrows>
          <Nav kind="first" />
          <Nav kind="prev" />
          <Nav kind="next" />
          <Nav kind="last" />
        </NavArrows>
        <Slash back />
        <TabName $on>Лист1</TabName>
        <Slash />
        <TabName>Лист2</TabName>
        <Slash />
        <TabName>Лист3</TabName>
        <Slash />
      </SheetTabs>
      <HScroll>
        <ScrollButton $w={15}><ArrowChevron d="left" /></ScrollButton>
        <HThumb><Ticks /></HThumb>
        <HGap />
        <ScrollButton $w={15}><ArrowChevron d="right" /></ScrollButton>
        <HEnd />
      </HScroll>
    </BottomBar>

    <StatusBar>
      Укажите
      <StatusCells>
        {STATUS_CELLS.map((w, i) => <StatusCell key={i} $w={w} />)}
      </StatusCells>
    </StatusBar>

    <Dialog>
      <DialogTitle>
        <DialogCaption>Мастер диаграмм (шаг 2 из 4): источник данных диа...</DialogCaption>
        <DialogBtn>?</DialogBtn>
        <DialogBtn $close><CloseX /></DialogBtn>
      </DialogTitle>
      <TabStrip>
        <DlgTab $on>Диапазон данных</DlgTab>
        <DlgTab>Ряд</DlgTab>
      </TabStrip>
      <TabPanel>
        <ChartBox><PieChart /></ChartBox>
        <Divider />
        <FormRow>
          <FormLabel $top={2}>Д<u>и</u>апазон:</FormLabel>
          <RangeInput>
            <RangeValue>=Лист1!$B$3:$C$7</RangeValue>
            <RangeButton><RangeIcon /></RangeButton>
          </RangeInput>
        </FormRow>
        <FormRow>
          <FormLabel $top={11}>Ряды в:</FormLabel>
          <RadioGroup>
            <RadioRow><Radio /><span>стро<u>к</u>ах</span></RadioRow>
            <RadioRow><Radio $on /><span>стол<u>б</u>цах</span></RadioRow>
          </RadioGroup>
        </FormRow>
      </TabPanel>
      <ButtonRow>
        <DlgButton>Отмена</DlgButton>
        <DlgButton $gap={9}>&lt; <u>Н</u>азад</DlgButton>
        <DlgButton $gap={3} $default><u>Д</u>алее &gt;</DlgButton>
        <DlgButton $gap={9}><u>Г</u>отово</DlgButton>
      </ButtonRow>
    </Dialog>

    <Assistant><Clippy /></Assistant>
  </App_>
)

export default App
